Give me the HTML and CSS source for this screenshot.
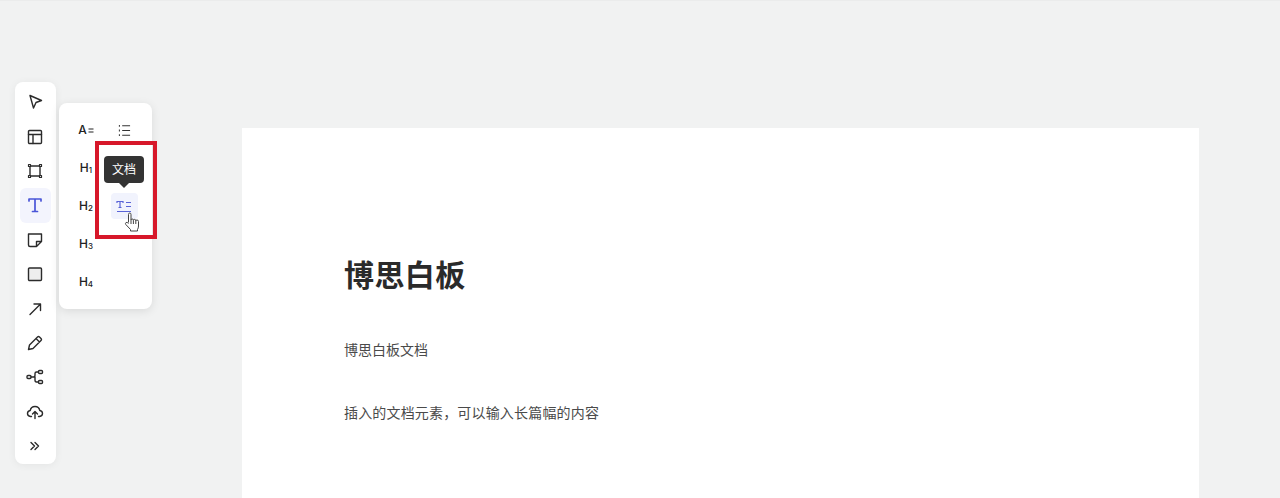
FILE: index.html
```html
<!DOCTYPE html>
<html lang="zh-CN">
<head>
    <meta charset="UTF-8">
    <meta name="viewport" content="width=device-width, initial-scale=1.0">
    <title>博思白板</title>
    <link rel="stylesheet" href="styles.css">
</head>
<body>
    <main class="canvas">
        <article class="doc">
            <h1 class="doc-title">博思白板</h1>
            <p class="doc-sub">博思白板文档</p>
            <p class="doc-text">插入的文档元素，可以输入长篇幅的内容</p>
        </article>
    </main>

    <!-- 左侧工具栏 -->
    <nav class="toolbar">
        <button class="tool"><svg viewBox="0 0 18 18"><path d="M4 2.5 L15.5 7.5 L10 9.5 L7.5 15 Z"/></svg></button>
        <button class="tool"><svg viewBox="0 0 18 18"><rect x="2.5" y="2.5" width="13" height="13" rx="1"/><path d="M2.5 6.5 H15.5 M7 6.5 V15.5"/></svg></button>
        <button class="tool"><svg viewBox="0 0 18 18"><rect x="4" y="4" width="10" height="10"/><rect class="fill-dark" x="2.5" y="2.5" width="2" height="2"/><rect class="fill-dark" x="13.5" y="2.5" width="2" height="2"/><rect class="fill-dark" x="2.5" y="13.5" width="2" height="2"/><rect class="fill-dark" x="13.5" y="13.5" width="2" height="2"/></svg></button>
        <button class="tool tool-active"><svg viewBox="0 0 18 18"><path d="M3 5 V3 H15 V5 M9 3 V15.5 M6.5 15.5 H11.5"/></svg></button>
        <button class="tool"><svg viewBox="0 0 18 18"><path d="M2.5 3 H15.5 V10.5 L10.5 15.5 H4 Q2.5 15.5 2.5 14 Z M15.5 10.5 H10.5 V15.5"/></svg></button>
        <button class="tool"><svg viewBox="0 0 18 18"><rect class="fill-soft" x="2.5" y="3" width="13" height="12.5" rx="1"/></svg></button>
        <button class="tool"><svg viewBox="0 0 18 18"><path d="M4 14.5 L14 4.5 M8 4 H14.5 V10.5"/></svg></button>
        <button class="tool"><svg viewBox="0 0 18 18"><path d="M2.5 15.5 L3.5 11 L11.5 3 Q12.5 2 13.5 3 L15 4.5 Q16 5.5 15 6.5 L7 14.5 Z M10 4.5 L13.5 8"/></svg></button>
        <button class="tool"><svg viewBox="0 0 18 18"><rect x="1" y="7.5" width="4" height="3" rx="1"/><rect x="12.5" y="2.5" width="4" height="3" rx="1"/><rect x="12.5" y="12.5" width="4" height="3" rx="1"/><path d="M5 9 H7.5 Q9 9 9 7 V5.5 Q9 4 10.5 4 H12.5 M9 9 V12 Q9 14 10.5 14 H12.5"/></svg></button>
        <button class="tool"><svg viewBox="0 0 18 18"><path d="M5.5 13.5 H4.5 Q1.5 13 1.5 10.5 Q1.5 8 4.2 7.5 Q5 3.5 9 3.5 Q13 3.5 13.8 7.5 Q16.5 8 16.5 10.5 Q16.5 13 13.5 13.5 H12.5 M9 15.5 V9 M6.5 11 L9 8.5 L11.5 11"/></svg></button>
        <button class="tool"><svg viewBox="0 0 18 18"><path d="M5 5.5 L8.5 9 L5 12.5 M9 5.5 L12.5 9 L9 12.5"/></svg></button>
    </nav>

    <!-- 文字面板 -->
    <section class="panel">
        <div class="cell"><span class="glyph">A</span><svg class="mini-lines" viewBox="0 0 6 8"><path d="M0.5 3 H5.5 M0.5 6 H5.5"/></svg></div>
        <div class="cell"><svg class="list-icon" viewBox="0 0 14 14"><path d="M4.5 2 H13 M4.5 7 H13 M4.5 12 H13 M1.5 1 V3 M1.5 6 V8 M1.5 11 V13"/></svg></div>
        <div class="cell"><span class="glyph">H<sub>1</sub></span></div>
        <div class="cell"></div>
        <div class="cell"><span class="glyph">H<sub>2</sub></span></div>
        <div class="cell"><span class="cell-hover"><svg class="doc-icon" viewBox="0 0 16 14"><path d="M1 3 V1.5 H7 V3 M4 1.5 V7.5 M2.5 7.5 H5.5 M10 2.5 H15 M10 6.5 H15 M1 11.5 H15"/></svg></span></div>
        <div class="cell"><span class="glyph">H<sub>3</sub></span></div>
        <div class="cell"></div>
        <div class="cell"><span class="glyph">H<sub>4</sub></span></div>
        <div class="cell"></div>
    </section>

    <div class="tooltip">文档</div>

    <!-- 红框标注 -->
    <div class="mark"></div>

    <svg class="cursor" viewBox="0 0 16 20"><path d="M4.5 10.5 V2.5 Q4.5 1 5.8 1 Q7 1 7 2.5 V8 Q7 7 8.2 7 Q9.4 7 9.4 8.3 Q9.4 7.4 10.6 7.4 Q11.8 7.4 11.8 8.8 Q11.8 8 13 8 Q14.5 8 14.5 9.5 V14 Q14.5 16 13.5 17.5 V19 H6.5 V17.5 L1.8 12.5 Q1 11.3 2 10.5 Q3 9.8 4.5 11.5 M7 8 V12 M9.4 8.3 V12 M11.8 8.8 V12"/></svg>
</body>
</html>
```

FILE: styles.css
```css
html, body {
    height: 100%;
}

body {
    margin: 0;
    background-color: #f1f2f2;
    color: #222;
    font-family: 'Inter', 'Noto Sans CJK SC', sans-serif;
    overflow: hidden;
}

.canvas {
    display: flex;
    justify-content: flex-start;
    height: 100%;
    padding: 128px 0 0 242px;
    box-sizing: border-box;
    border-top: 1px solid #ebecec;
}

.doc {
    width: 957px;
    background-color: #fff;
    padding: 127px 102px 0;
    box-sizing: border-box;
    margin-top: -1px;
}

.doc-title {
    font-size: 30px;
    line-height: 40px;
    font-weight: 700;
    letter-spacing: 0.4px;
    color: #2a2a2a;
    margin: 0;
}

.doc-sub, .doc-text {
    font-size: 14px;
    line-height: 20px;
    color: #4a4a4a;
    margin: 0;
}

.doc-sub {
    margin-top: 45px;
}

.doc-text {
    margin-top: 43px;
    letter-spacing: 0.17px;
}

.toolbar {
    position: absolute;
    left: 15px;
    top: 82px;
    width: 41px;
    height: 382px;
    padding: 3px 1px 0 0;
    box-sizing: border-box;
    display: flex;
    flex-direction: column;
    align-items: center;
    background-color: #fff;
    border-radius: 8px;
    box-shadow: 0 1px 8px rgba(0, 0, 0, 0.06);
}

.tool {
    flex: none;
    width: 31px;
    height: 34.4px;
    padding: 0;
    border: none;
    border-radius: 6px;
    background: none;
    display: flex;
    align-items: center;
    justify-content: center;
}

.tool svg {
    width: 18px;
    height: 18px;
    fill: none;
    stroke: #2b2b2b;
    stroke-width: 1.4;
    stroke-linejoin: round;
    stroke-linecap: round;
}

.tool .fill-soft {
    fill: #eeeeee;
}

.tool .fill-dark {
    fill: #fff;
    stroke-width: 1.2;
}

.tool-active {
    background-color: #f3f4fd;
}

.tool-active svg {
    stroke: #4a55d8;
    stroke-width: 1.7;
}

.panel {
    position: absolute;
    left: 59px;
    top: 103px;
    width: 93px;
    height: 206px;
    padding: 8px 9px 8px 10px;
    box-sizing: border-box;
    display: grid;
    grid-template-columns: 36px 38px;
    grid-auto-rows: 38px;
    background-color: #fff;
    border-radius: 8px;
    box-shadow: 0 2px 10px rgba(0, 0, 0, 0.1);
}

.cell {
    display: flex;
    align-items: center;
    justify-content: center;
}

.glyph {
    font-size: 12px;
    font-weight: 500;
    line-height: 14px;
    color: #222;
    margin-left: -2px;
}

.glyph sub {
    font-size: 8px;
    line-height: 0;
    vertical-align: -1px;
}

.mini-lines {
    width: 6px;
    height: 8px;
    margin-left: 1px;
    fill: none;
    stroke: #222;
    stroke-width: 1.2;
}

.list-icon {
    width: 13px;
    height: 13px;
    fill: none;
    stroke: #333;
    stroke-width: 1.1;
}

.cell-hover {
    width: 27px;
    height: 26px;
    border-radius: 4px;
    background-color: #f1f3fd;
    display: flex;
    align-items: center;
    justify-content: center;
}

.doc-icon {
    width: 16px;
    height: 14px;
    margin-top: 2px;
    fill: none;
    stroke: #5a64d8;
    stroke-width: 1.2;
}

.tooltip {
    position: absolute;
    left: 104px;
    top: 156px;
    width: 40px;
    height: 27px;
    border-radius: 4px;
    background-color: #333;
    color: #fff;
    font-size: 12px;
    line-height: 27px;
    text-align: center;
}

.tooltip::after {
    content: "";
    position: absolute;
    left: 15px;
    top: 27px;
    border: 5px solid transparent;
    border-bottom: none;
    border-top-color: #333;
}

.mark {
    position: absolute;
    left: 95px;
    top: 141px;
    width: 62px;
    height: 98px;
    box-sizing: border-box;
    border: 4px solid #d7182a;
}

.cursor {
    position: absolute;
    left: 124px;
    top: 212px;
    width: 16px;
    height: 20px;
    fill: #fff;
    stroke: #444;
    stroke-width: 1;
    stroke-linejoin: round;
}
```
